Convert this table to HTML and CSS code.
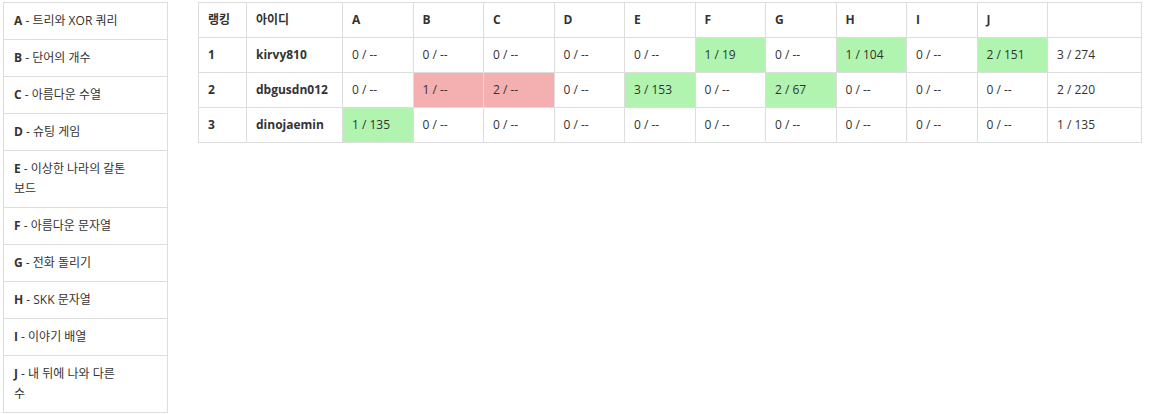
FILE: index.html
```html
<!DOCTYPE html>
<html lang="ko">
<head>
    <meta charset="UTF-8">
    <title>Scoreboard</title>
    <link rel="stylesheet" href="styles.css">
</head>
<body>
    <div class="page">
        <!-- Problem list -->
        <ul class="problem-list">
            <li><b>A</b> - 트리와 XOR 쿼리</li>
            <li><b>B</b> - 단어의 개수</li>
            <li><b>C</b> - 아름다운 수열</li>
            <li><b>D</b> - 슈팅 게임</li>
            <li><b>E</b> - 이상한 나라의 갈톤 보드</li>
            <li><b>F</b> - 아름다운 문자열</li>
            <li><b>G</b> - 전화 돌리기</li>
            <li><b>H</b> - SKK 문자열</li>
            <li><b>I</b> - 이야기 배열</li>
            <li><b>J</b> - 내 뒤에 나와 다른 수</li>
        </ul>

        <!-- Scoreboard -->
        <div class="board">
            <table class="score-table">
                <colgroup>
                    <col class="col-rank">
                    <col class="col-id">
                    <col><col><col><col><col><col><col><col><col><col>
                    <col class="col-total">
                </colgroup>
                <thead>
                    <tr>
                        <th>랭킹</th>
                        <th>아이디</th>
                        <th>A</th><th>B</th><th>C</th><th>D</th><th>E</th>
                        <th>F</th><th>G</th><th>H</th><th>I</th><th>J</th>
                        <th></th>
                    </tr>
                </thead>
                <tbody>
                    <tr>
                        <th>1</th>
                        <th>kirvy810</th>
                        <td>0 / --</td>
                        <td>0 / --</td>
                        <td>0 / --</td>
                        <td>0 / --</td>
                        <td>0 / --</td>
                        <td class="solved">1 / 19</td>
                        <td>0 / --</td>
                        <td class="solved">1 / 104</td>
                        <td>0 / --</td>
                        <td class="solved">2 / 151</td>
                        <td>3 / 274</td>
                    </tr>
                    <tr>
                        <th>2</th>
                        <th>dbgusdn012</th>
                        <td>0 / --</td>
                        <td class="failed">1 / --</td>
                        <td class="failed">2 / --</td>
                        <td>0 / --</td>
                        <td class="solved">3 / 153</td>
                        <td>0 / --</td>
                        <td class="solved">2 / 67</td>
                        <td>0 / --</td>
                        <td>0 / --</td>
                        <td>0 / --</td>
                        <td>2 / 220</td>
                    </tr>
                    <tr>
                        <th>3</th>
                        <th>dinojaemin</th>
                        <td class="solved">1 / 135</td>
                        <td>0 / --</td>
                        <td>0 / --</td>
                        <td>0 / --</td>
                        <td>0 / --</td>
                        <td>0 / --</td>
                        <td>0 / --</td>
                        <td>0 / --</td>
                        <td>0 / --</td>
                        <td>0 / --</td>
                        <td>1 / 135</td>
                    </tr>
                </tbody>
            </table>
        </div>
    </div>
</body>
</html>
```

FILE: styles.css
```css
* {
    margin: 0;
    padding: 0;
    box-sizing: border-box;
}

body {
    font-family: 'Open Sans', 'Noto Sans CJK KR', sans-serif;
    font-size: 12px;
    color: #333;
    background: #fff;
}

.page {
    display: flex;
    align-items: flex-start;
    padding: 2px 10px 0 3px;
    gap: 30px;
}

/* Problem list */
.problem-list {
    list-style: none;
    width: 165px;
    flex-shrink: 0;
    border: 1px solid #ddd;
    border-bottom: none;
}

.problem-list li {
    padding: 8px 39.5px 8px 10px;
    line-height: 20px;
    border-bottom: 1px solid #ddd;
}

.problem-list b {
    font-weight: 700;
}

/* Scoreboard */
.board {
    flex: 1;
}

.score-table {
    width: 100%;
    border-collapse: collapse;
    table-layout: fixed;
}

.col-rank {
    width: 48px;
}

.col-id {
    width: 96px;
}

.col-total {
    width: 94px;
}

.score-table th,
.score-table td {
    border: 1px solid #ddd;
    height: 35px;
    padding: 0 9px;
    text-align: left;
    line-height: 18px;
    white-space: nowrap;
}

.score-table th {
    font-weight: 700;
}

.score-table td.solved {
    background: #b0f4b0;
}

.score-table td.failed {
    background: #f4b0b0;
}
```
